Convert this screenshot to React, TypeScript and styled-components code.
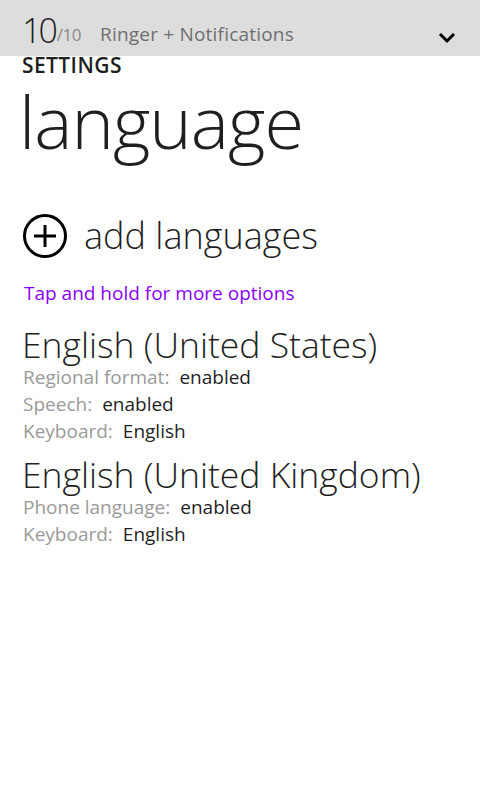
import React from 'react'
import styled, { createGlobalStyle } from 'styled-components'

const GlobalStyle = createGlobalStyle`
  html, body {
    margin: 0;
    padding: 0;
    background: #ffffff;
  }
  body {
    font-family: "Open Sans", "Noto Sans", sans-serif;
    color: #1f1f1f;
  }
`

const Page = styled.div`
  width: 480px;
  min-height: 800px;
  background: #ffffff;
`

const TopBar = styled.div`
  height: 56px;
  background: #dddddd;
  display: flex;
  align-items: flex-end;
  padding: 0 22px;
  box-sizing: border-box;
`

const Counter = styled.span`
  font-size: 34px;
  font-weight: 300;
  color: #1f1f1f;
  line-height: 1;
  padding-bottom: 9px;
  letter-spacing: -3px;
`

const CounterTotal = styled.span`
  font-size: 17px;
  font-weight: 400;
  color: #8a8a8a;
  padding-bottom: 10px;
  margin-left: 2px;
  letter-spacing: -0.5px;
`

const BarTitle = styled.span`
  font-size: 19px;
  color: #6f6f6f;
  margin-left: 19px;
  padding-bottom: 9px;
  flex: 1;
  letter-spacing: 0.2px;
`

const Chevron = styled.svg`
  width: 18px;
  height: 12px;
  margin-bottom: 12px;
  margin-right: 2px;
`

const Content = styled.div`
  padding: 0 22px;
`

const Section = styled.div`
  font-size: 21px;
  font-weight: 600;
  line-height: 20px;
  margin-top: -1px;
  color: #1f1f1f;
  letter-spacing: 0.4px;
`

const PageTitle = styled.h1`
  font-size: 72px;
  font-weight: 300;
  margin: 6px 0 0 -3px;
  line-height: 80px;
  letter-spacing: -1px;
  color: #1f1f1f;
`

const AddRow = styled.div`
  display: flex;
  align-items: center;
  margin-top: 50px;
  gap: 16px;
`

const AddLabel = styled.span`
  font-size: 36px;
  font-weight: 300;
  color: #1f1f1f;
`

const Hint = styled.div`
  font-size: 19px;
  color: #8a00ff;
  margin-top: 20px;
  margin-left: 2px;
`

const LanguageList = styled.div`
  margin-top: 18px;
  display: flex;
  flex-direction: column;
  gap: 9px;
`

const LanguageName = styled.div`
  font-size: 35.5px;
  font-weight: 300;
  line-height: 40px;
  color: #1f1f1f;
`

const DetailRow = styled.div`
  font-size: 19px;
  line-height: 27px;
  margin-left: 1px;
`

const DetailLabel = styled.span`
  color: #9a9a9a;
  margin-right: 10px;
`

const DetailValue = styled.span`
  color: #1f1f1f;
`

type Language = {
  name: string
  details: [string, string][]
}

const languages: Language[] = [
  {
    name: 'English (United States)',
    details: [
      ['Regional format:', 'enabled'],
      ['Speech:', 'enabled'],
      ['Keyboard:', 'English'],
    ],
  },
  {
    name: 'English (United Kingdom)',
    details: [
      ['Phone language:', 'enabled'],
      ['Keyboard:', 'English'],
    ],
  },
]

const App: React.FC = () => {
  return (
    <Page>
      <GlobalStyle />
      <TopBar>
        <Counter>10</Counter>
        <CounterTotal>/10</CounterTotal>
        <BarTitle>Ringer + Notifications</BarTitle>
        <Chevron viewBox="0 0 18 12">
          <polyline points="2,2 9,9 16,2" fill="none" stroke="#000" strokeWidth="3" />
        </Chevron>
      </TopBar>

      <Content>
        <Section>SETTINGS</Section>
        <PageTitle>language</PageTitle>

        <AddRow>
          <svg width="46" height="46" viewBox="0 0 46 46">
            <circle cx="23" cy="23" r="20.5" fill="none" stroke="#000" strokeWidth="3" />
            <line x1="12" y1="23" x2="34" y2="23" stroke="#000" strokeWidth="3" />
            <line x1="23" y1="12" x2="23" y2="34" stroke="#000" strokeWidth="3" />
          </svg>
          <AddLabel>add languages</AddLabel>
        </AddRow>

        <Hint>Tap and hold for more options</Hint>

        <LanguageList>
          {languages.map((lang) => (
            <div key={lang.name}>
              <LanguageName>{lang.name}</LanguageName>
              {lang.details.map(([label, value]) => (
                <DetailRow key={label}>
                  <DetailLabel>{label}</DetailLabel>
                  <DetailValue>{value}</DetailValue>
                </DetailRow>
              ))}
            </div>
          ))}
        </LanguageList>
      </Content>
    </Page>
  )
}

export default App
